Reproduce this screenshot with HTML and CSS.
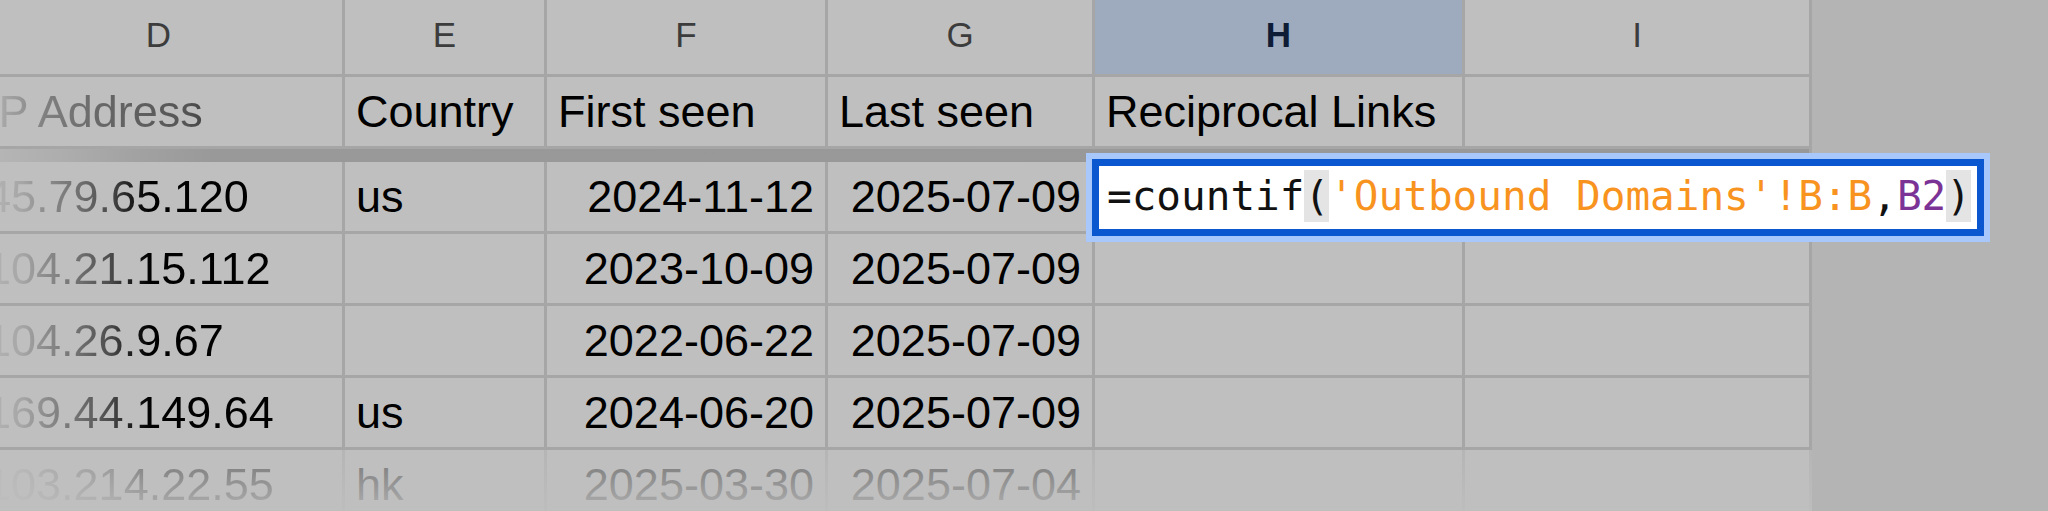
FILE: index.html
```html
<!DOCTYPE html>
<html lang="en">
<head>
<meta charset="utf-8">
<title>Sheet</title>
<link rel="stylesheet" href="styles.css">
</head>
<body>
<div class="stage">
  <div class="sheet">
    <div class="c hd">D</div>
    <div class="c hd">E</div>
    <div class="c hd">F</div>
    <div class="c hd">G</div>
    <div class="c hd sel">H</div>
    <div class="c hd">I</div>

    <div class="c"><span class="fade-head">IP Address</span></div>
    <div class="c">Country</div>
    <div class="c">First seen</div>
    <div class="c">Last seen</div>
    <div class="c">Reciprocal Links</div>
    <div class="c"></div>

    <div class="freeze"></div>

    <div class="c"><span class="fade-ip">45.79.65.120</span></div>
    <div class="c">us</div>
    <div class="c r">2024-11-12</div>
    <div class="c r">2025-07-09</div>
    <div class="c"></div>
    <div class="c"></div>

    <div class="c"><span class="fade-ip">104.21.15.112</span></div>
    <div class="c"></div>
    <div class="c r">2023-10-09</div>
    <div class="c r">2025-07-09</div>
    <div class="c"></div>
    <div class="c"></div>

    <div class="c"><span class="fade-ip">104.26.9.67</span></div>
    <div class="c"></div>
    <div class="c r">2022-06-22</div>
    <div class="c r">2025-07-09</div>
    <div class="c"></div>
    <div class="c"></div>

    <div class="c"><span class="fade-ip">169.44.149.64</span></div>
    <div class="c">us</div>
    <div class="c r">2024-06-20</div>
    <div class="c r">2025-07-09</div>
    <div class="c"></div>
    <div class="c"></div>

    <div class="c"><span class="fade-ip">103.214.22.55</span></div>
    <div class="c">hk</div>
    <div class="c r">2025-03-30</div>
    <div class="c r">2025-07-04</div>
    <div class="c"></div>
    <div class="c"></div>
  </div>

  <div class="fade-bottom"></div>

  <div class="editor">
    <div class="editor-in">
      <span class="fx">=countif<span class="hl">(</span><span class="str">'Outbound Domains'!B:B</span>,<span class="ref">B2</span><span class="hl">)</span></span>
    </div>
  </div>
</div>
</body>
</html>
```

FILE: styles.css
```css
html, body {
  margin: 0;
  padding: 0;
}

body {
  width: 2048px;
  height: 511px;
  overflow: hidden;
  background: #b4b4b4;
}

.stage {
  position: relative;
  width: 2048px;
  height: 511px;
  overflow: hidden;
  background: #b4b4b4;
}

.sheet {
  display: grid;
  grid-template-columns: 367px 199px 278px 264px 367px 344px;
  grid-template-rows: 74px 69px 10px 69px 69px 69px 69px 69px;
  gap: 3px;
  width: max-content;
  margin-left: -25px;
  background: #a6a6a6;
  border-right: 3px solid #a6a6a6;
}

.c {
  display: flex;
  align-items: center;
  padding: 0 11px;
  background: #bfbfbf;
  font-family: "Liberation Sans", Arial, sans-serif;
  font-size: 45px;
  color: #000;
  white-space: nowrap;
  overflow: hidden;
}

.c.r {
  justify-content: flex-end;
}

.c.hd {
  justify-content: center;
  padding-bottom: 4px;
  font-size: 35px;
  color: #3c3c3c;
}

.c.hd.sel {
  background: #9eaabd;
  color: #0f1c36;
  font-weight: 700;
}

.freeze {
  grid-column: 1 / -1;
  align-self: start;
  height: 13px;
  background: linear-gradient(to right, #b8b8b8 0px, #adadad 90px, #a2a2a2 160px, #999999 240px, #989898 100%);
}

.fade-ip,
.fade-head {
  -webkit-background-clip: text;
  background-clip: text;
  color: transparent;
}

.fade-ip {
  background-image: linear-gradient(to right,
    #b6b6b6 0px, #a6a6a6 36px, #8a8a8a 62px, #6e6e6e 95px,
    #4a4a4a 125px, #1e1e1e 145px, #000 165px);
}

.fade-head {
  background-image: linear-gradient(to right,
    #bbbbbb 0px, #a4a4a4 20px, #7f7f7f 60px, #666 120px,
    #555 200px, #333 240px, #000 280px);
}

.fade-bottom {
  position: absolute;
  left: 0;
  top: 450px;
  width: 1812px;
  height: 61px;
  background: linear-gradient(to bottom, rgba(191, 191, 191, 0.6), rgba(191, 191, 191, 0.92));
}

.editor {
  position: absolute;
  left: 1086px;
  top: 153px;
  width: 904px;
  height: 89px;
  box-sizing: border-box;
  border: 6px solid #a8c7fa;
}

.editor-in {
  box-sizing: border-box;
  height: 100%;
  display: flex;
  align-items: center;
  padding: 0 0 3px 8px;
  border: 7px solid #0b57d0;
  background: #fff;
}

.fx {
  font-family: "DejaVu Sans Mono", "Liberation Mono", monospace;
  font-size: 41px;
  line-height: 52px;
  color: #111;
  white-space: pre;
}

.hl {
  display: inline-block;
  background: #e4e4e4;
}

.str {
  color: #f7931e;
}

.ref {
  color: #7b3396;
}
```
